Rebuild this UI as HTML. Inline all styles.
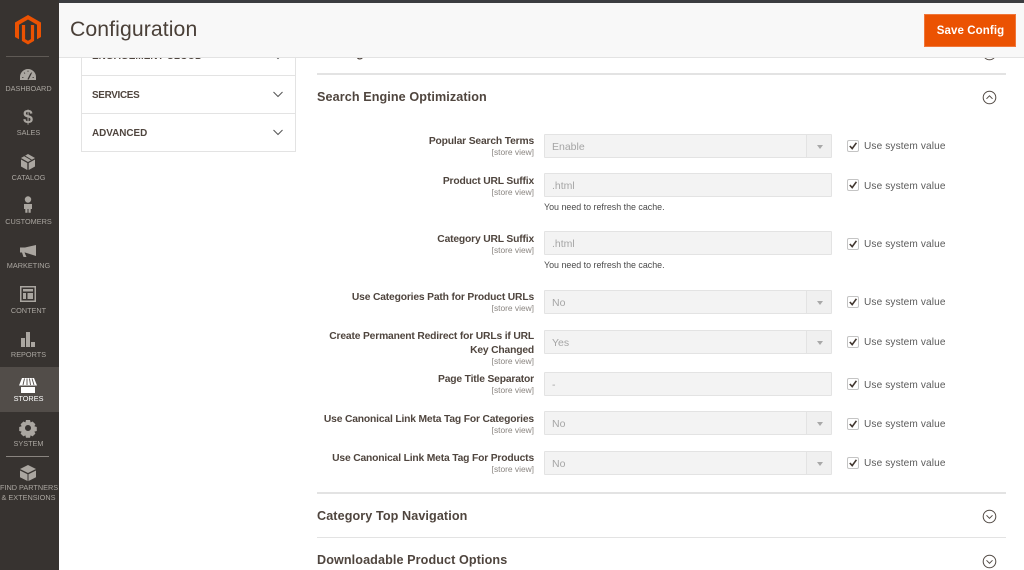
<!DOCTYPE html>
<html><head><meta charset="utf-8"><style>
*{box-sizing:border-box}
html,body{margin:0;padding:0;width:1024px;height:570px;overflow:hidden;background:#fff;font-family:"Liberation Sans",sans-serif}
#wrap{position:absolute;left:0;top:0;width:1024px;height:570px;overflow:hidden;filter:blur(.25px)}
.a{position:absolute;white-space:nowrap}
#side{position:absolute;left:0;top:0;width:59px;height:570px;background:#373330}
.nl{position:absolute;left:0;width:57px;text-align:center;color:#aaa6a0;font-size:7.300px;line-height:10px;white-space:nowrap}
.ni{position:absolute;left:0;top:0}
.lab{position:absolute;right:490px;margin-top:1px;text-align:right;font-size:10.3px;font-weight:bold;color:#4f453e;line-height:13.5px;letter-spacing:-.17px;white-space:nowrap}
.sv{position:absolute;right:490px;margin-top:1px;text-align:right;font-size:8.4px;color:#8a8580;line-height:9px;white-space:nowrap}
.f{position:absolute;left:544px;width:288px;background:#f3f3f3;border:1px solid #e3e3e3;border-radius:1px;height:24px;color:#a5a5a5;font-size:10.5px;line-height:25px;padding-left:7px}
.f.s:after{content:"";position:absolute;right:0;top:0;width:24px;height:22px;border-left:1px solid #e3e3e3;background:#f0f0f0}
.f.s:before{content:"";position:absolute;z-index:1;right:8px;top:10px;border:3px solid transparent;border-top:4px solid #a8a8a8;border-bottom:0}
.c{position:absolute;left:846.500px;width:12px;height:12px;border:1px solid #c4c4c4;border-radius:2px;background:#fff}
.c svg{position:absolute;left:0;top:0}
.u{position:absolute;left:864px;margin-top:1px;font-size:10.1px;color:#5a5a5a;line-height:13px;white-space:nowrap;letter-spacing:.12px}
.n{position:absolute;left:544px;margin-top:1px;font-size:8.900px;color:#4a4a4a;line-height:11px;white-space:nowrap}
.hr{position:absolute;left:317px;width:689px;background:#e3e3e3;height:1px}
.h{position:absolute;left:317px;font-size:12.6px;font-weight:bold;color:#4f453e;line-height:16px;letter-spacing:.1px;white-space:nowrap}
.m{position:absolute;left:92px;font-size:9.9px;font-weight:bold;color:#4f453e;line-height:13px;white-space:nowrap}
.bx{position:absolute;left:81px;width:215px;border:1px solid #e3e3e3;border-top:0}
</style></head><body><div id="wrap">

<div class="bx" style="top:50px;height:26px"></div>
<div class="bx" style="top:76px;height:38px"></div>
<div class="bx" style="top:114px;height:38px"></div>
<div class="m" style="top:50px;letter-spacing:.1px">ENGAGEMENT CLOUD</div>
<div class="m" style="top:88.500px;letter-spacing:-.3px">SERVICES</div>
<div class="m" style="top:126.500px">ADVANCED</div>
<svg class="a" style="left:272px;top:52px" width="12" height="9"><path d="M1.500 2L6 6.500L10.500 2" fill="none" stroke="#555" stroke-width="1"/></svg>
<svg class="a" style="left:272px;top:90px" width="12" height="9"><path d="M1.500 2L6 6.500L10.500 2" fill="none" stroke="#555" stroke-width="1"/></svg>
<svg class="a" style="left:272px;top:128px" width="12" height="9"><path d="M1.500 2L6 6.500L10.500 2" fill="none" stroke="#555" stroke-width="1"/></svg>

<div class="h" style="top:45px">Catalog Search</div>
<svg class="a" style="left:982px;top:46px" width="15" height="15"><circle cx="7.500" cy="7.500" r="6.300" fill="none" stroke="#514943" stroke-width="1"/></svg>
<div class="hr" style="top:73px;height:2px"></div>
<div class="h" style="top:89px">Search Engine Optimization</div>
<svg class="a" style="left:982px;top:90px" width="15" height="15"><circle cx="7.500" cy="7.500" r="6.300" fill="none" stroke="#514943" stroke-width="1"/><path d="M4.500 8.800L7.500 5.800L10.500 8.800" fill="none" stroke="#514943" stroke-width="1"/></svg>

<div class="lab" style="top:134px">Popular Search Terms</div><div class="sv" style="top:147px">[store view]</div>
<div class="f s" style="top:134px">Enable</div>
<div class="c" style="top:140px"><svg width="10" height="10"><path d="M1.800 5L4.200 7.600L8.400 1.800" fill="none" stroke="#41362f" stroke-width="1.600"/></svg></div><div class="u" style="top:139px">Use system value</div>

<div class="lab" style="top:174px">Product URL Suffix</div><div class="sv" style="top:186.500px">[store view]</div>
<div class="f" style="top:173px">.html</div>
<div class="n" style="top:201px">You need to refresh the cache.</div>
<div class="c" style="top:179px"><svg width="10" height="10"><path d="M1.800 5L4.200 7.600L8.400 1.800" fill="none" stroke="#41362f" stroke-width="1.600"/></svg></div><div class="u" style="top:179px">Use system value</div>

<div class="lab" style="top:232px">Category URL Suffix</div><div class="sv" style="top:244.500px">[store view]</div>
<div class="f" style="top:231px">.html</div>
<div class="n" style="top:259px">You need to refresh the cache.</div>
<div class="c" style="top:238px"><svg width="10" height="10"><path d="M1.800 5L4.200 7.600L8.400 1.800" fill="none" stroke="#41362f" stroke-width="1.600"/></svg></div><div class="u" style="top:237px">Use system value</div>

<div class="lab" style="top:290px">Use Categories Path for Product URLs</div><div class="sv" style="top:302.500px">[store view]</div>
<div class="f s" style="top:290px">No</div>
<div class="c" style="top:296px"><svg width="10" height="10"><path d="M1.800 5L4.200 7.600L8.400 1.800" fill="none" stroke="#41362f" stroke-width="1.600"/></svg></div><div class="u" style="top:295px">Use system value</div>

<div class="lab" style="top:329px">Create Permanent Redirect for URLs if URL<br>Key Changed</div><div class="sv" style="top:355.500px">[store view]</div>
<div class="f s" style="top:330px">Yes</div>
<div class="c" style="top:336px"><svg width="10" height="10"><path d="M1.800 5L4.200 7.600L8.400 1.800" fill="none" stroke="#41362f" stroke-width="1.600"/></svg></div><div class="u" style="top:335px">Use system value</div>

<div class="lab" style="top:372px">Page Title Separator</div><div class="sv" style="top:384.500px">[store view]</div>
<div class="f" style="top:372px">-</div>
<div class="c" style="top:378px"><svg width="10" height="10"><path d="M1.800 5L4.200 7.600L8.400 1.800" fill="none" stroke="#41362f" stroke-width="1.600"/></svg></div><div class="u" style="top:378px">Use system value</div>

<div class="lab" style="top:412px">Use Canonical Link Meta Tag For Categories</div><div class="sv" style="top:424.500px">[store view]</div>
<div class="f s" style="top:411px">No</div>
<div class="c" style="top:418px"><svg width="10" height="10"><path d="M1.800 5L4.200 7.600L8.400 1.800" fill="none" stroke="#41362f" stroke-width="1.600"/></svg></div><div class="u" style="top:417px">Use system value</div>

<div class="lab" style="top:451px">Use Canonical Link Meta Tag For Products</div><div class="sv" style="top:463.500px">[store view]</div>
<div class="f s" style="top:451px">No</div>
<div class="c" style="top:457px"><svg width="10" height="10"><path d="M1.800 5L4.200 7.600L8.400 1.800" fill="none" stroke="#41362f" stroke-width="1.600"/></svg></div><div class="u" style="top:456px">Use system value</div>

<div class="hr" style="top:492px;height:2px"></div>
<div class="h" style="top:508px">Category Top Navigation</div>
<svg class="a" style="left:982px;top:509px" width="15" height="15"><circle cx="7.500" cy="7.500" r="6.300" fill="none" stroke="#514943" stroke-width="1"/><path d="M4.500 6.300L7.500 9.300L10.500 6.300" fill="none" stroke="#514943" stroke-width="1"/></svg>
<div class="hr" style="top:537px"></div>
<div class="h" style="top:552px">Downloadable Product Options</div>
<svg class="a" style="left:982px;top:554px" width="15" height="15"><circle cx="7.500" cy="7.500" r="6.300" fill="none" stroke="#514943" stroke-width="1"/><path d="M4.500 6.300L7.500 9.300L10.500 6.300" fill="none" stroke="#514943" stroke-width="1"/></svg>

<!-- header -->
<div class="a" style="left:59px;top:3px;width:965px;height:54.500px;background:#f8f8f8;border-bottom:1px solid #e3e3e3"></div>
<div class="a" style="left:0;top:0;width:1024px;height:3px;background:#3b3d40"></div>
<div class="a" style="left:70px;top:16px;font-size:21.200px;line-height:28px;color:#4a4038;letter-spacing:.1px">Configuration</div>
<div class="a" style="left:924px;top:14px;width:92px;height:33px;background:#eb5202;border:1px solid #f0763a;color:#fff;font-size:11.500px;font-weight:bold;line-height:32px;text-align:center;letter-spacing:.1px;padding-left:1px">Save Config</div>

<!-- sidebar -->
<div id="side">
<div class="a" style="left:0;top:367px;width:59px;height:45px;background:#524d49"></div>
<svg class="ni" width="59" height="570">
<!-- logo -->
<path d="M28 15L41 22.500V37L37 39.300V24.800L28 19.500L19 24.800V39.300L15 37V22.500Z" fill="#eb5202"/>
<path d="M23.500 25V40L28 42.600L32.500 40V25" fill="none" stroke="#eb5202" stroke-width="3.200"/>
<rect x="6" y="56" width="43" height="1" fill="#5f5a55"/>
<g fill="#aaa6a0">
<!-- dashboard -->
<path d="M20 80V77a8 8 0 0 1 16 0V80Z"/>
<!-- catalog -->
<path d="M28 154L35 158L28 162L21 158Z"/><path d="M21 159.500L27.300 163V170L21 166.500Z"/><path d="M35 159.500L28.700 163V170L35 166.500Z"/>
<!-- customers -->
<circle cx="28" cy="199.500" r="3.200"/><path d="M24 204h8v5l-1.300 0v3.700h-2.200v-3.700h-1v3.700h-2.200v-3.700L24 209z"/>
<!-- marketing -->
<path d="M20 247.500h5L36 245V256L25 252.500H24.500L26.500 257H23.500L22 252.500H20Z"/>
<!-- content -->
<path fill-rule="evenodd" d="M20 286h16v16H20zM21.500 287.500v13h13v-13zM23 289h10v2.500H23zM23 293h3v6h-3zM27.500 293h5.500v6h-5.500z"/>
<!-- reports -->
<path d="M21 338h4v9h-4zM26 332h4v15h-4zM31 342h4v5h-4z"/>
<!-- system -->
<path fill-rule="evenodd" d="M26 420h4l.6 2.400 2-.9 2.800 2.800-1 2 2.400.7v4l-2.400.6 1 2-2.800 2.800-2-1-.6 2.400h-4l-.6-2.400-2 1-2.800-2.800 1-2-2.400-.6v-4l2.400-.7-1-2 2.800-2.800 2 .9zM28 425a3 3 0 1 0 .01 0z"/>
<!-- find partners -->
<path d="M28 465L36 469L28 473L20 469Z"/><path d="M20 470.500L27.500 474.200V481L20 477.300Z"/><path d="M36 470.500L28.500 474.200V481L36 477.300Z"/>
</g>
<path d="M28 79.500l3-6" stroke="#373330" stroke-width="1.300"/>
<path d="M22 77.500h1.500M32.500 77.500H34M24 72.500l1 1.200M28 70.500v1.500M32 72.500l-1 1.200" stroke="#373330" stroke-width=".7"/>
<path d="M24.500 155.800L31.500 160" stroke="#373330" stroke-width="1"/>
<!-- stores -->
<path d="M22 378H34L37 385.500H19Z" fill="#fff"/><path d="M21 387H35V393H21Z" fill="#fff"/>
<path d="M24.500 378.500L23 385M27 378.500V385M29.500 378.500L30.500 385M32 378.500L34 385" stroke="#524d49" stroke-width=".9"/>
<rect x="6" y="456" width="43" height="1" fill="#8a8580"/>
</svg>

<div class="nl" style="top:83.500px">DASHBOARD</div>
<div class="a" style="left:0;width:56px;top:106px;text-align:center;color:#aaa6a0;font-size:18px;font-weight:bold;line-height:22px">$</div>
<div class="nl" style="top:127.500px">SALES</div>
<div class="nl" style="top:172.500px">CATALOG</div>
<div class="nl" style="top:216.500px">CUSTOMERS</div>
<div class="nl" style="top:261px">MARKETING</div>
<div class="nl" style="top:305.500px">CONTENT</div>
<div class="nl" style="top:349.500px">REPORTS</div>
<div class="nl" style="top:394px;color:#fff">STORES</div>
<div class="nl" style="top:438.500px">SYSTEM</div>
<div class="nl" style="top:483px;line-height:9.500px">FIND PARTNERS<br>&amp; EXTENSIONS</div>
</div>
</div></body></html>
